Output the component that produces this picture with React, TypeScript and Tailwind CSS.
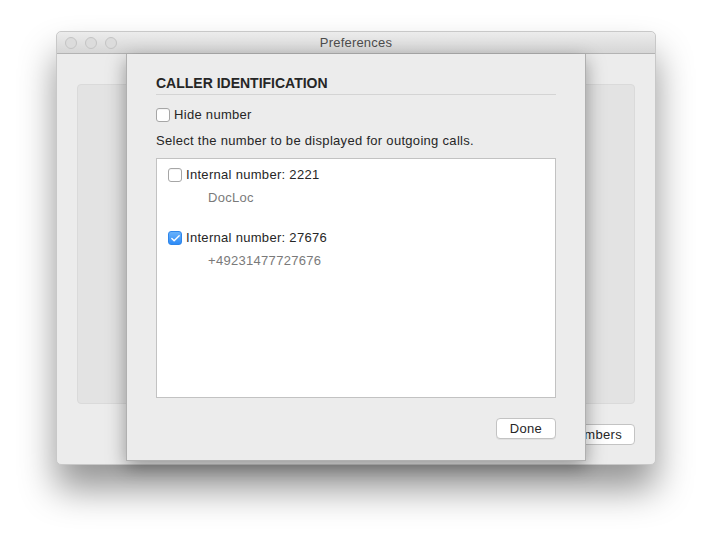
import { Check } from 'lucide-react';

function Box({ checked }: { checked?: boolean }) {
  if (checked) {
    return (
      <span className="flex h-[14px] w-[14px] shrink-0 items-center justify-center rounded-[3px] bg-gradient-to-b from-[#68b1fa] to-[#2d8cf7] border border-[#2f86ea]">
        <Check className="h-[11px] w-[11px] text-white" strokeWidth={3} />
      </span>
    );
  }
  return (
    <span className="h-[14px] w-[14px] shrink-0 rounded-[3px] border border-[#a6a6a6] bg-white shadow-[inset_0_1px_0_rgba(0,0,0,0.04)]" />
  );
}

function NumberItem({ label, sub, checked }: { label: string; sub: string; checked?: boolean }) {
  return (
    <div className="flex flex-col">
      <div className="flex h-[16px] items-center gap-[4px]">
        <Box checked={checked} />
        <span className="text-[#262626]">{label}</span>
      </div>
      <div className="mt-[7px] h-[16px] pl-[40px] leading-[16px] text-[#7a7a7a]">{sub}</div>
    </div>
  );
}

export default function App() {
  return (
    <div
      className="min-h-[545px] w-[712px] bg-white pl-[56px] pt-[31px] text-[13px] tracking-[0.3px] text-[#262626]"
      style={{ fontFamily: '"Liberation Sans", Arial, sans-serif' }}
    >
      <div className="relative h-[434px] w-[600px] rounded-[5px] border border-[#c8c8c8] bg-[#ececec] shadow-[0_24px_36px_rgba(0,0,0,0.42)]">
        {/* title bar */}
        <div className="relative flex h-[22px] items-center justify-center rounded-t-[5px] border-b border-[#b3b3b3] bg-gradient-to-b from-[#ececec] to-[#d6d6d6]">
          <div className="absolute left-[8px] top-[5px] flex gap-[8px]">
            <span className="h-[12px] w-[12px] rounded-full border border-[#c4c4c4] bg-[#dcdcdc]" />
            <span className="h-[12px] w-[12px] rounded-full border border-[#c4c4c4] bg-[#dcdcdc]" />
            <span className="h-[12px] w-[12px] rounded-full border border-[#c4c4c4] bg-[#dcdcdc]" />
          </div>
          <span className="text-[13px] tracking-[0.2px] text-[#4d4d4d]">Preferences</span>
        </div>

        {/* window body (behind sheet) */}
        <div className="flex flex-col px-[20px] pt-[30px]">
          <div className="h-[320px] rounded-[4px] border border-[#dadada] bg-[#e3e3e3]" />
          <div className="mt-[20px] flex justify-end">
            <button className="h-[21px] rounded-[4px] border border-[#c3c3c3] bg-white px-[12px] text-[13px] leading-[19px] text-[#262626]">
              Numbers
            </button>
          </div>
        </div>

        {/* sheet */}
        <div className="absolute left-[69px] top-[22px] flex h-[407px] w-[460px] flex-col border-x border-b border-[#b0b0b0] bg-[#ececec] px-[29px] shadow-[0_6px_18px_rgba(0,0,0,0.38)]">
          <div className="mt-[21px] border-b border-[#d4d4d4] pb-[2px] text-[14px] font-bold leading-[17px] tracking-normal text-[#262626]">
            CALLER IDENTIFICATION
          </div>
          <div className="mt-[12px] flex h-[16px] items-center gap-[4px]">
            <Box />
            <span>Hide number</span>
          </div>
          <div className="mt-[10px] h-[16px] leading-[16px]">Select the number to be displayed for outgoing calls.</div>
          <div className="mt-[9px] flex h-[240px] flex-col gap-[24px] border border-[#c2c2c2] bg-white pl-[11px] pt-[8px]">
            <NumberItem label="Internal number: 2221" sub="DocLoc" />
            <NumberItem label="Internal number: 27676" sub="+49231477727676" checked />
          </div>
          <div className="mt-[20px] flex justify-end">
            <button className="h-[21px] w-[60px] rounded-[4px] border border-[#c3c3c3] bg-white text-[13px] leading-[19px] text-[#262626] shadow-[0_1px_0_rgba(0,0,0,0.05)]">
              Done
            </button>
          </div>
        </div>
      </div>
    </div>
  );
}
